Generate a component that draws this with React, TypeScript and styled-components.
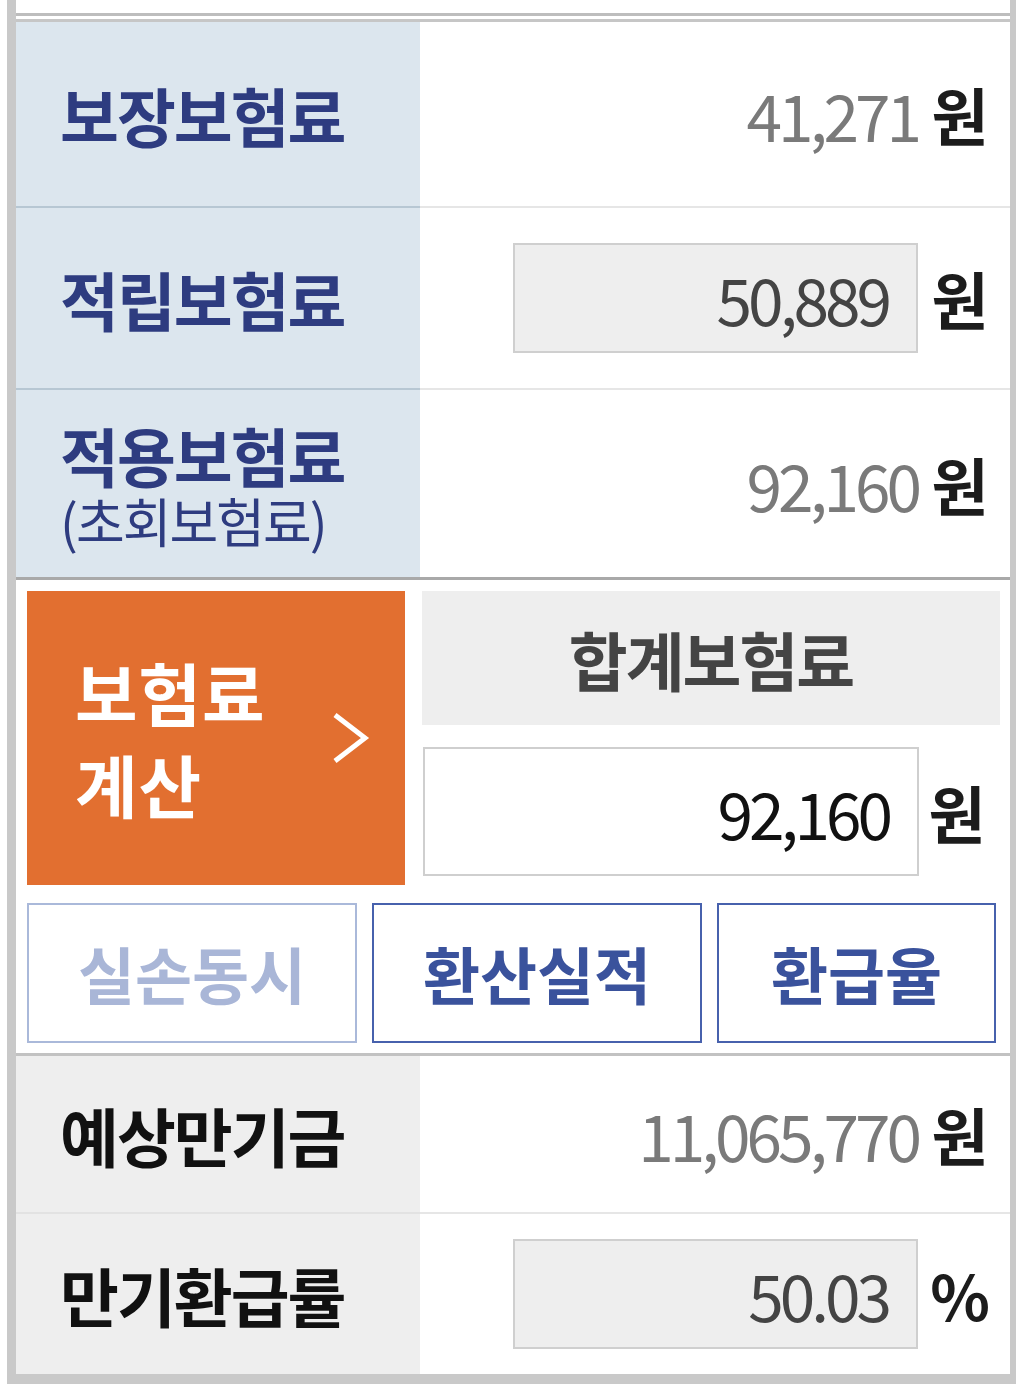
import styled, { createGlobalStyle } from 'styled-components'

const GlobalStyle = createGlobalStyle`
  body {
    margin: 0;
    background: #fff;
    font-family: "Noto Sans CJK KR", "Noto Sans", sans-serif;
  }
`

const Frame = styled.div`
  width: 1009px;
  margin-left: 7px;
  box-sizing: border-box;
  border-left: 9px solid #c9c9c9;
  border-right: 6px solid #c9c9c9;
  border-bottom: 10px solid #c9c9c9;
  background: #fff;
`

const TopStrip = styled.div`
  height: 13px;
  border-bottom: 3px solid #bdbdbd;
`

const Table = styled.div`
  margin-top: 3px;
  border-top: 3px solid #c6c6c6;
`

const Row = styled.div<{ $h: number }>`
  display: grid;
  grid-template-columns: 404px 1fr;
  height: ${(p) => p.$h}px;
`

const LabelCell = styled.div<{ $tone: 'blue' | 'gray'; $line?: boolean }>`
  display: flex;
  flex-direction: column;
  justify-content: center;
  padding-left: 44px;
  background: ${(p) => (p.$tone === 'blue' ? '#dce6ee' : '#eeeeee')};
  color: ${(p) => (p.$tone === 'blue' ? '#2e3c80' : '#111')};
  border-bottom: ${(p) =>
    p.$line ? `2px solid ${p.$tone === 'blue' ? '#b7c7d3' : '#e2e2e2'}` : 'none'};
`

const Label = styled.div`
  font-size: 64px;
  font-weight: 700;
  letter-spacing: -2px;
  line-height: 72px;
  white-space: nowrap;
`

const SubLabel = styled.div`
  font-size: 53px;
  font-weight: 400;
  letter-spacing: -2px;
  line-height: 60px;
  white-space: nowrap;
`

const ValueCell = styled.div<{ $line?: boolean }>`
  display: flex;
  align-items: center;
  justify-content: flex-end;
  gap: 12px;
  padding-right: 20px;
  border-bottom: ${(p) => (p.$line ? '2px solid #e6e6e6' : 'none')};
`

const Amount = styled.span<{ $tone?: 'gray' | 'dark' | 'black' }>`
  font-size: 64px;
  letter-spacing: -4px;
  color: ${(p) => (p.$tone === 'black' ? '#111' : p.$tone === 'dark' ? '#444' : '#7a7a7a')};
`

const Unit = styled.span`
  width: 60px;
  text-align: center;
  font-size: 62px;
  font-weight: 700;
  color: #1c1c1c;
`

const Field = styled.div<{ $w: number; $h: number; $fill?: boolean }>`
  box-sizing: border-box;
  width: ${(p) => p.$w}px;
  height: ${(p) => p.$h}px;
  display: flex;
  align-items: center;
  justify-content: flex-end;
  padding-right: 28px;
  background: ${(p) => (p.$fill ? '#eeeeee' : '#fff')};
  border: 2px solid #cfcfcf;
`

const CalcSection = styled.div`
  border-top: 3px solid #a9a9a9;
  border-bottom: 3px solid #c2c2c2;
  padding: 11px 10px 10px 11px;
`

const CalcTop = styled.div`
  display: flex;
  gap: 17px;
`

const CalcButton = styled.button`
  width: 378px;
  height: 294px;
  border: none;
  background: #e26f30;
  color: #fff;
  display: flex;
  align-items: center;
  justify-content: space-between;
  padding: 0 34px 0 48px;
  font-family: inherit;
  font-size: 68px;
  font-weight: 700;
  letter-spacing: 1px;
  line-height: 92px;
  text-align: left;
  cursor: pointer;
`

const TotalColumn = styled.div`
  flex: 1;
  display: flex;
  flex-direction: column;
  gap: 22px;
`

const TotalHeader = styled.div`
  height: 134px;
  background: #eeeeee;
  display: flex;
  align-items: center;
  justify-content: center;
  font-size: 64px;
  font-weight: 700;
  letter-spacing: -2px;
  color: #444;
`

const TotalRow = styled.div`
  display: flex;
  align-items: center;
  gap: 8px;
  padding-left: 1px;
`

const ButtonRow = styled.div`
  display: grid;
  grid-template-columns: 330px 330px 279px;
  gap: 15px;
  margin-top: 18px;
`

const LinkButton = styled.button<{ $disabled?: boolean }>`
  height: 140px;
  background: #fff;
  border: 2px solid ${(p) => (p.$disabled ? '#aab9da' : '#4761ad')};
  color: ${(p) => (p.$disabled ? '#a9b6d7' : '#3a529c')};
  font-family: inherit;
  font-size: 62px;
  font-weight: 700;
  letter-spacing: 0;
  cursor: pointer;
`

const Chevron = () => (
  <svg width="40" height="54" viewBox="0 0 40 54">
    <polyline points="4,4 34,27 4,50" fill="none" stroke="#fff" strokeWidth="5" />
  </svg>
)

export default function App() {
  return (
    <>
      <GlobalStyle />
      <Frame>
        <TopStrip />
        <Table>
          <Row $h={186}>
            <LabelCell $tone="blue" $line>
              <Label>보장보험료</Label>
            </LabelCell>
            <ValueCell $line>
              <Amount>41,271</Amount>
              <Unit>원</Unit>
            </ValueCell>
          </Row>
          <Row $h={182}>
            <LabelCell $tone="blue" $line>
              <Label>적립보험료</Label>
            </LabelCell>
            <ValueCell $line>
              <Field $w={405} $h={110} $fill>
                <Amount $tone="dark">50,889</Amount>
              </Field>
              <Unit>원</Unit>
            </ValueCell>
          </Row>
          <Row $h={187}>
            <LabelCell $tone="blue">
              <Label>적용보험료</Label>
              <SubLabel>(초회보험료)</SubLabel>
            </LabelCell>
            <ValueCell>
              <Amount>92,160</Amount>
              <Unit>원</Unit>
            </ValueCell>
          </Row>
          <CalcSection>
            <CalcTop>
              <CalcButton>
                <span>
                  보험료
                  <br />
                  계산
                </span>
                <Chevron />
              </CalcButton>
              <TotalColumn>
                <TotalHeader>합계보험료</TotalHeader>
                <TotalRow>
                  <Field $w={496} $h={129}>
                    <Amount $tone="black">92,160</Amount>
                  </Field>
                  <Unit>원</Unit>
                </TotalRow>
              </TotalColumn>
            </CalcTop>
            <ButtonRow>
              <LinkButton $disabled>실손동시</LinkButton>
              <LinkButton>환산실적</LinkButton>
              <LinkButton>환급율</LinkButton>
            </ButtonRow>
          </CalcSection>
          <Row $h={158}>
            <LabelCell $tone="gray" $line>
              <Label>예상만기금</Label>
            </LabelCell>
            <ValueCell $line>
              <Amount>11,065,770</Amount>
              <Unit>원</Unit>
            </ValueCell>
          </Row>
          <Row $h={160}>
            <LabelCell $tone="gray">
              <Label>만기환급률</Label>
            </LabelCell>
            <ValueCell>
              <Field $w={405} $h={110} $fill>
                <Amount $tone="dark">50.03</Amount>
              </Field>
              <Unit>%</Unit>
            </ValueCell>
          </Row>
        </Table>
      </Frame>
    </>
  )
}
